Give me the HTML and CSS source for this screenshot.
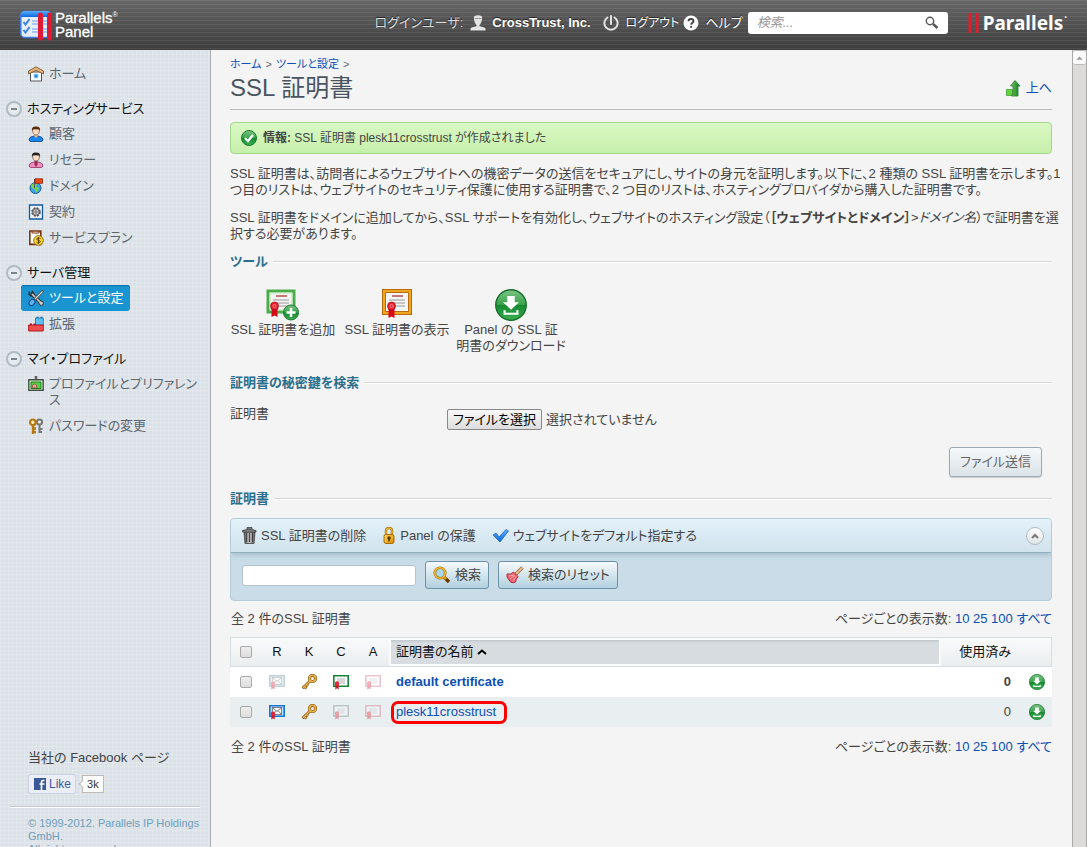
FILE: index.html
```html
<!DOCTYPE html>
<html lang="ja">
<head>
<meta charset="utf-8">
<title>SSL 証明書 - Parallels Panel</title>
<link rel="stylesheet" href="styles.css">
</head>
<body>
<svg class="defs" aria-hidden="true">
  <defs>
    <linearGradient id="green" x1="0" y1="0" x2="0" y2="1"><stop offset="0" stop-color="#7cc587"/><stop offset=".48" stop-color="#39a34c"/><stop offset=".52" stop-color="#168a30"/><stop offset="1" stop-color="#39b052"/></linearGradient>
    <linearGradient id="gold" x1="0" y1="0" x2="1" y2="1"><stop offset="0" stop-color="#ffdc5c"/><stop offset="1" stop-color="#d98500"/></linearGradient>
    <linearGradient id="blue" x1="0" y1="0" x2="0" y2="1"><stop offset="0" stop-color="#59b0ff"/><stop offset="1" stop-color="#0b66dd"/></linearGradient>
    <linearGradient id="steel" x1="0" y1="0" x2="1" y2="0"><stop offset="0" stop-color="#555"/><stop offset=".5" stop-color="#c5c5c5"/><stop offset="1" stop-color="#555"/></linearGradient>
    <linearGradient id="arrow" x1="0" y1="0" x2="1" y2="0"><stop offset="0" stop-color="#7ccb58"/><stop offset="1" stop-color="#087526"/></linearGradient>
    <symbol id="i-download" viewBox="0 0 30 30"><circle cx="15" cy="15" r="14.3" fill="url(#green)" stroke="#16702a" stroke-width="1.3"/><path d="M11.5 6.500h7v6h4L15 19.500l-7.500-7h4z" fill="#fff"/><path d="M9 20v3.200h12V20" fill="none" stroke="#fff" stroke-width="2"/></symbol>
    <symbol id="i-key" viewBox="0 0 16 16"><path d="M9.300 6.700 1.500 14.300M3.500 12.500l2 2M5.500 10.500l1.500 1.500" stroke="#80500e" stroke-width="2.600"/><circle cx="11.500" cy="4.500" r="3.100" fill="none" stroke="#80500e" stroke-width="3"/><path d="M9.300 6.700 1.800 14M3.500 12.500l1.700 1.700M5.500 10.500l1.200 1.200" stroke="#e6b04c" stroke-width="1.500"/><circle cx="11.500" cy="4.500" r="3.100" fill="none" stroke="#e6b04c" stroke-width="1.900"/></symbol>
    <symbol id="i-cert" viewBox="0 0 16 16"><path d="M.8 1.800h14.400v10.400H.8z" fill="#fff" stroke="currentColor" stroke-width="1.600"/><path d="M4 5h8M4 7h8M7 9h5" stroke="#999" stroke-width=".8"/><path d="M2.300 10h3.400v5.500L4 14.300l-1.700 1.200z" fill="#c51b28"/><circle cx="4" cy="9.500" r="2.200" fill="#e62537"/></symbol>
    <symbol id="i-req" viewBox="0 0 16 16"><path d="M.8 1.800h14.400v10.400H.8z" fill="#b9dcff" stroke="currentColor" stroke-width="1.600"/><path d="M3.500 3.500h9v7h-9z" fill="#fff" stroke="#555" stroke-width=".7"/><path d="m3.500 3.500 4.500 4 4.500-4M3.500 10.500l3.500-4M12.500 10.500l-3.500-4" fill="none" stroke="#555" stroke-width=".8"/><path d="M2.300 10h3.400v5.500L4 14.300l-1.700 1.200z" fill="#c51b28"/><circle cx="4" cy="9.800" r="2.200" fill="#e62537"/></symbol>
  </defs>
</svg>

<header class="topbar">
  <a class="brand" href="#">
    <svg width="32" height="32" viewBox="0 0 32 32" aria-hidden="true"><rect x=".8" y="2.500" width="30" height="26" rx="4" fill="#e8eef8" stroke="#3c7be6" stroke-width="1.500"/><path d="M1 8V6a4 4 0 0 1 4-4h22a4 4 0 0 1 4 4v2z" fill="url(#blue)"/><path d="m3.500 13 2 2.500L9.500 10M3.500 21l2 2.500 4-5.500" fill="none" stroke="#3d83e6" stroke-width="2"/><path d="M12 12h16M12 15h16M12 20h16M12 23h16" stroke="#6b9de8" stroke-width="1.200"/><path d="M20.500 6v23M29.500 6v23" stroke="#e01a32" stroke-width="5" stroke-linecap="round"/></svg>
    <span class="brand-name">Parallels<sup>®</sup><br>Panel</span>
  </a>
  <div class="session">
    <span class="session-label">ログインユーザ:</span>
    <a class="session-user" href="#"><svg width="16" height="16" viewBox="0 0 16 16" aria-hidden="true"><path d="M4 1.500Q8-1 12 1.500q.5 3-1 6.500l-1.500 2v1.200l5 1.300q1.500 1 1 3H.5q-.5-2 1-3l5-1.300V10L5 8Q3.500 4.500 4 1.500z" fill="#e4e4e4"/><path d="M4.500 3.500h7" stroke="#999"/></svg>CrossTrust, Inc.</a>
    <a class="session-logout" href="#"><svg width="16" height="16" viewBox="0 0 16 16" fill="none" stroke="#e2e2e2" stroke-width="2" stroke-linecap="round" aria-hidden="true"><path d="M4.500 2.500a6.600 6.600 0 1 0 7 0M8 1v8"/></svg>ログアウト</a>
    <a class="session-help" href="#"><svg width="16" height="16" viewBox="0 0 16 16" aria-hidden="true"><circle cx="8" cy="8" r="7.500" fill="#fff"/><path d="M5.500 6.300Q5.500 4 8 4t2.500 2.200c0 1.500-2.400 1.700-2.400 3.500M8.100 11v1.800" fill="none" stroke="#444" stroke-width="1.900"/></svg>ヘルプ</a>
    <form class="topsearch" role="search">
      <input type="search" placeholder="検索..." aria-label="検索">
      <button type="button" aria-label="検索する"><svg width="14" height="14" viewBox="0 0 14 14" fill="none" stroke="#555" aria-hidden="true"><circle cx="5" cy="5" r="3.700" stroke-width="1.400"/><path d="m8 8 4.500 4" stroke-width="2.400"/></svg></button>
    </form>
    <a class="company" href="#"><svg width="11" height="22" viewBox="0 0 11 22" aria-hidden="true"><path d="M2 1v20M9 1v20" stroke="#e21b2d" stroke-width="3"/></svg>Parallels<span class="company-dot">·</span></a>
  </div>
</header>

<div class="layout">
  <aside class="sidebar">
    <nav class="nav" aria-label="メイン">
      <ul>
        <li><a href="#"><svg viewBox="0 0 16 16" aria-hidden="true"><path d="M2.500 6h11v9h-11z" fill="#fff" stroke="#555"/><path d="M8 .8 15.500 5v3L8 4.500.5 8V5z" fill="#e4b079" stroke="#805832" stroke-width=".9"/><path d="M6 8h4v4H6z" fill="#168bf2" stroke="#b8d7f5"/></svg><span>ホーム</span></a></li>
      </ul>
      <h2><button type="button" aria-label="折りたたむ"></button>ホスティングサービス</h2>
      <ul>
        <li><a href="#"><svg viewBox="0 0 16 16" aria-hidden="true"><path d="M1 13q1-2.500 5-3h4q4 .5 5 3 0 2.500-2 2.500H3q-2 0-2-2.500z" fill="#1687f2" stroke="#0b3d7d" stroke-width=".8"/><path d="M6.500 8h3v2.500L8 12l-1.500-1.500z" fill="#f2b98a"/><path d="M4.500 3.500q3.500-2 7 0Q11.500 9 8 9T4.500 3.500z" fill="#fddbc0" stroke="#69401f" stroke-width=".6"/><path d="M4 5Q3 .3 8 .5T12 5l-1-1.700H5z" fill="#5a2909"/></svg><span>顧客</span></a></li>
        <li><a href="#"><svg viewBox="0 0 16 16" aria-hidden="true"><path d="M1 13q1-2.500 5-3h4q4 .5 5 3 0 2.500-2 2.500H3q-2 0-2-2.500z" fill="#ef8fc0" stroke="#8b3161" stroke-width=".8"/><path d="M6.500 8h3v5L8 15l-1.500-2z" fill="#a22955"/><path d="M4.500 3.500q3.500-2 7 0Q11.500 9 8 9T4.500 3.500z" fill="#fddbc0" stroke="#444" stroke-width=".6"/><path d="M4 5Q3 .3 8 .5T12 5l-1-1.700H5z" fill="#222"/></svg><span>リセラー</span></a></li>
        <li><a href="#"><svg viewBox="0 0 16 16" aria-hidden="true"><circle cx="7.500" cy="10" r="5.500" fill="#43a4e8" stroke="#17608c"/><path d="M3 7q3-3 6-1l-1 3 3 1-2 4q-2 0-2-3Q3 11 3 7z" fill="#75d543"/><path d="M6.500 10V1" stroke="#555"/><path d="M7 .8h7.500v4.500H7z" fill="#ed4d16" stroke="#901d05" stroke-width=".8"/></svg><span>ドメイン</span></a></li>
        <li><a href="#"><svg viewBox="0 0 16 16" aria-hidden="true"><path d="M1.500 1h13v14h-13z" fill="#eef4fa" stroke="#135ba0" stroke-width="1.300"/><circle cx="8" cy="8" r="3.800" fill="none" stroke="#555" stroke-width="2" stroke-dasharray="2 1"/><circle cx="8" cy="8" r="3.200" fill="#ddd" stroke="#555"/><circle cx="8" cy="8" r="1.200" fill="#fff" stroke="#555"/></svg><span>契約</span></a></li>
        <li><a href="#"><svg viewBox="0 0 16 16" aria-hidden="true"><path d="M1.800 1h11v13.500h-11z" fill="#fff" stroke="#7b330c" stroke-width="1.600"/><path d="M4 1v2h7V1M1.500 14h4" fill="none" stroke="#7b330c"/><circle cx="10.500" cy="10.500" r="4.800" fill="#ffd735" stroke="#8c6508"/><path d="M12.500 8.700Q11.800 8 10.500 8 8.700 8 8.700 9.200c0 1.500 3.700 1 3.700 2.500 0 1.300-3 1.600-3.900.5M10.500 7v7" fill="none" stroke="#5a3c00"/></svg><span>サービスプラン</span></a></li>
      </ul>
      <h2><button type="button" aria-label="折りたたむ"></button>サーバ管理</h2>
      <ul>
        <li><a class="active" href="#" aria-current="page"><svg viewBox="0 0 16 16" aria-hidden="true"><path d="m3 3 10 10" stroke="#333" stroke-width="3.500"/><path d="M1.300 1.500v3l2 1.500 2-.8.200-2L4 1" fill="none" stroke="#333" stroke-width="1.600"/><circle cx="13.200" cy="13.200" r="2.200" fill="#ccc" stroke="#333"/><path d="m4 4 9 9" stroke="#ccc" stroke-width="1.700"/><path d="M15 .8 7 9" stroke="#444" stroke-width="2.600"/><path d="M14.500 1.500 7 9" stroke="#d9d9d9" stroke-width="1.300"/><ellipse cx="4" cy="12.500" rx="3.400" ry="2.500" transform="rotate(-45 4 12.500)" fill="#5ab2ff" stroke="#123e6c"/></svg><span>ツールと設定</span></a></li>
        <li><a href="#"><svg viewBox="0 0 16 16" aria-hidden="true"><path d="M7.500 2h7.800v7H7.500z" fill="#5fc0f4" stroke="#1471a6" stroke-width=".8"/><path d="M8.500.8h2V2h-2zM12.500.8h2V2h-2z" fill="#116cad"/><path d="M.6 9h14.700v6H.6z" fill="#ee4d4d" stroke="#b00d18" stroke-width=".9"/><path d="M2 7.500h2V9H2zM5.500 7.500h2V9h-2z" fill="#b00d18"/></svg><span>拡張</span></a></li>
      </ul>
      <h2><button type="button" aria-label="折りたたむ"></button>マイ・プロファイル</h2>
      <ul>
        <li><a href="#"><svg viewBox="0 0 16 16" aria-hidden="true"><path d="M7 0h2v4H7z" fill="#777" stroke="#444" stroke-width=".5"/><path d="M.8 3.800h14.400v10.400H.8z" fill="#d8efcf" stroke="#445044" stroke-width="1.400"/><path d="M3 6h10v6.500H3z" fill="#5bd044" stroke="#16851a"/><path d="M4 12q0-4 2.500-4T9 12z" fill="#e8a58c" stroke="#7b3932" stroke-width=".6"/></svg><span>プロファイルとプリファレンス</span></a></li>
        <li><a href="#"><svg viewBox="0 0 16 16" aria-hidden="true"><circle cx="11.500" cy="4" r="2.600" fill="#eee" stroke="#777" stroke-width="2"/><path d="M11.500 7v8M12 11h2.500M12 14h2" stroke="#777" stroke-width="2"/><circle cx="4.800" cy="4.300" r="2.800" fill="#fff0c3" stroke="#b87711" stroke-width="2.200"/><path d="M5 7v9M5 10.500h3M5 14h3" stroke="#b87711" stroke-width="2.300"/></svg><span>パスワードの変更</span></a></li>
      </ul>
    </nav>
    <div class="sidefoot">
      <p class="fb-title">当社の Facebook ページ</p>
      <div class="fb">
        <button type="button" class="fb-like"><svg width="12" height="12" viewBox="0 0 12 12" aria-hidden="true"><path d="M0 0h12v12H0z" fill="#3b5998"/><path d="M10.500 2.500H9Q7.500 2.500 7.500 4v8M5.500 6h5" fill="none" stroke="#fff" stroke-width="1.700"/></svg>Like</button>
        <span class="fb-count">3k</span>
      </div>
      <p class="copy">© 1999-2012. Parallels IP Holdings GmbH.<br>All rights reserved.</p>
    </div>
  </aside>

  <main class="main">
    <div class="crumbs"><a href="#">ホーム</a> <i>&gt;</i> <a href="#">ツールと設定</a> <i>&gt;</i></div>
    <div class="title">
      <h1>SSL 証明書</h1>
      <a href="#"><svg width="15" height="17" viewBox="0 0 15 17" aria-hidden="true"><path d="M.5 9.500h6v6h-6z" fill="#66d438" stroke="#43a33b" stroke-width=".8"/><path d="M9 .5 14 6h-2v10H5.500l1.500-3V6H4.500z" fill="url(#arrow)" stroke="#238336" stroke-width=".8"/></svg>上へ</a>
    </div>

    <div class="notice" role="status"><svg width="16" height="16" viewBox="0 0 16 16" aria-hidden="true"><circle cx="8" cy="8" r="7.500" fill="url(#green)" stroke="#187a2d"/><path d="m4 8 3 3 5-6" fill="none" stroke="#fff" stroke-width="2.300"/></svg><span><b>情報:</b> SSL 証明書 plesk11crosstrust が作成されました</span></div>

    <p class="text">SSL 証明書は、訪問者によるウェブサイトへの機密データの送信をセキュアにし、サイトの身元を証明します。以下に、2 種類の SSL 証明書を示します。1 つ目のリストは、ウェブサイトのセキュリティ保護に使用する証明書で、2 つ目のリストは、ホスティングプロバイダから購入した証明書です。</p>
    <p class="text">SSL 証明書をドメインに追加してから、SSL サポートを有効化し、ウェブサイトのホスティング設定（<b>［ウェブサイトとドメイン］</b>&gt;<em>ドメイン名</em>）で証明書を選択する必要があります。</p>

    <section>
      <h2 class="legend">ツール</h2>
      <div class="tools">
        <a href="#"><svg width="34" height="32" viewBox="0 0 34 32" aria-hidden="true"><path d="M2 2h26v21H2z" fill="#f5f5f5" stroke="#4cac4c" stroke-width="3"/><path d="M4 4h22v17H4z" fill="none" stroke="#b7e6ad"/><path d="M10 7h11" stroke="#a22" stroke-width="1.200"/><path d="M7 11h16M7 14h16M12 17h11" stroke="#999"/><path d="M5.500 18h6v10l-3-1.500-3 1.500z" fill="#d70918"/><circle cx="8.500" cy="17" r="4" fill="#e72330" stroke="#a60713" stroke-width=".7"/><circle cx="8.500" cy="17" r="1.600" fill="none" stroke="#ff9ca0" stroke-width=".7"/><circle cx="25" cy="23.500" r="7.500" fill="url(#green)" stroke="#187a2d"/><path d="M25 19v9M20.500 23.500h9" stroke="#fff" stroke-width="2.500"/></svg>SSL 証明書を追加</a>
        <a href="#"><svg width="34" height="32" viewBox="0 0 34 32" aria-hidden="true"><path d="M4 2h26v22H4z" fill="#f5f5f5" stroke="#a55b08" stroke-width="4"/><path d="M4 2h26v22H4z" fill="none" stroke="#f0a420" stroke-width="2.500"/><path d="M12 7h11" stroke="#a22" stroke-width="1.200"/><path d="M9 11h16M9 14h16M14 17h11" stroke="#999"/><path d="M8.500 18h6v11l-3-1.500-3 1.500z" fill="#d70918"/><circle cx="11.500" cy="17" r="4" fill="#e72330" stroke="#a60713" stroke-width=".7"/><circle cx="11.500" cy="17" r="1.600" fill="none" stroke="#ff9ca0" stroke-width=".7"/></svg>SSL 証明書の表示</a>
        <a href="#"><svg width="32" height="32" aria-hidden="true"><use href="#i-download"/></svg><span>Panel の SSL 証<br>明書のダウンロード</span></a>
      </div>
    </section>

    <section>
      <h2 class="legend">証明書の秘密鍵を検索</h2>
      <form class="upload">
        <div class="upload-row">
          <span class="upload-label">証明書</span>
          <label class="file"><input type="file" aria-label="証明書"><span class="file-btn">ファイルを選択</span><span>選択されていません</span></label>
        </div>
        <button type="button" class="submit">ファイル送信</button>
      </form>
    </section>

    <section>
      <h2 class="legend">証明書</h2>
      <div class="panel">
        <div class="actions">
          <a href="#"><svg width="16" height="17" viewBox="0 0 16 17" aria-hidden="true"><path d="M3 5h11l-1 11.500H4z" fill="url(#steel)" stroke="#444" stroke-width=".8"/><path d="M5.500 6v9M8.500 6v9M11.500 6v9" stroke="#444"/><path d="M1.500 3.500Q8 1 15 3.500V5h-13.500zM6 2V.6h5V2" fill="#888" stroke="#444" stroke-width=".9"/></svg>SSL 証明書の削除</a>
          <a href="#"><svg width="14" height="17" viewBox="0 0 14 17" aria-hidden="true"><path d="M4 8V3.500q0-2.500 3-2.500t3 2.500V8" fill="none" stroke="#a76b00" stroke-width="2.400"/><path d="M4 8V3.500q0-2.500 3-2.500t3 2.500V8" fill="none" stroke="#ffcc43"/><rect x="2" y="7.500" width="10" height="9" rx="2" fill="url(#gold)" stroke="#a76b00"/><circle cx="7" cy="11" r="1.700" fill="#553100"/><path d="M7 11v3.500" stroke="#553100" stroke-width="1.500"/></svg>Panel の保護</a>
          <a href="#"><svg width="17" height="15" viewBox="0 0 17 15" aria-hidden="true"><path d="m1 7 3-2 3 4 7-7.500L16.500 3 8 14z" fill="url(#blue)" stroke="#2468b5" stroke-width=".8"/></svg>ウェブサイトをデフォルト指定する</a>
          <button type="button" class="collapse" aria-label="検索を隠す"><svg width="8" height="6" viewBox="0 0 8 6" aria-hidden="true"><path d="m1 5 3-3 3 3" fill="none" stroke="#777" stroke-width="2"/></svg></button>
        </div>
        <form class="filter">
          <input type="text" aria-label="証明書の検索">
          <button type="button"><svg width="18" height="18" viewBox="0 0 18 18" aria-hidden="true"><path d="m11 11 5 5" stroke="#6c3900" stroke-width="3.400"/><path d="m11 11 2 2" stroke="#e39b1b" stroke-width="3"/><circle cx="7" cy="7" r="5.200" fill="#a8d6ed" stroke="#9d6b00" stroke-width="2.600"/><circle cx="7" cy="7" r="5.200" fill="none" stroke="#f8bd35" stroke-width="1.500"/></svg>検索</button>
          <button type="button"><svg width="18" height="18" viewBox="0 0 18 18" aria-hidden="true"><path d="M16.500 1.500 10 8" stroke="#9a6a40" stroke-width="3.300"/><path d="M16.500 1.500 10 8" stroke="#edbd8e" stroke-width="1.800"/><path d="M1 8q4 1 6.500-2l4.500 4.500Q10 13 9.500 16q-2 1.500-5 0L1 11z" fill="#ed5e68" stroke="#b52e40"/><path d="m3 10 5-1M4 13l5-3.500M7 15.500l3-5" stroke="#ffc2c4" stroke-width=".8"/></svg>検索のリセット</button>
        </form>
      </div>

      <div class="pager"><span>全 2 件のSSL 証明書</span><span>ページごとの表示数: <a href="#">10</a> <a href="#">25</a> <a href="#">100</a> <a href="#">すべて</a></span></div>

      <table class="list">
        <thead>
          <tr><th class="c-check"><input type="checkbox" aria-label="すべて選択"></th><th class="c-flag">R</th><th class="c-flag">K</th><th class="c-flag">C</th><th class="c-flag">A</th><th class="c-name"><a href="#">証明書の名前<svg width="10" height="6" viewBox="0 0 10 6" aria-hidden="true"><path d="m1 5 4-3.500L9 5" fill="none" stroke="#000" stroke-width="2"/></svg></a></th><th class="c-used">使用済み</th><th class="c-get"></th></tr>
        </thead>
        <tbody>
          <tr>
            <td><input type="checkbox" aria-label="default certificate"></td>
            <td><svg class="blank off" aria-hidden="true"><use href="#i-req"/></svg></td>
            <td><svg aria-hidden="true"><use href="#i-key"/></svg></td>
            <td><svg class="cert" aria-hidden="true"><use href="#i-cert"/></svg></td>
            <td><svg class="ca off" aria-hidden="true"><use href="#i-cert"/></svg></td>
            <td class="c-name"><a href="#"><b>default certificate</b></a></td>
            <td class="c-used"><b>0</b></td>
            <td><a href="#" aria-label="ダウンロード"><svg class="get" aria-hidden="true"><use href="#i-download"/></svg></a></td>
          </tr>
          <tr>
            <td><input type="checkbox" aria-label="plesk11crosstrust"></td>
            <td><svg class="req" aria-hidden="true"><use href="#i-req"/></svg></td>
            <td><svg aria-hidden="true"><use href="#i-key"/></svg></td>
            <td><svg class="none off" aria-hidden="true"><use href="#i-cert"/></svg></td>
            <td><svg class="ca off" aria-hidden="true"><use href="#i-cert"/></svg></td>
            <td class="c-name"><a class="marked" href="#">plesk11crosstrust</a></td>
            <td class="c-used">0</td>
            <td><a href="#" aria-label="ダウンロード"><svg class="get" aria-hidden="true"><use href="#i-download"/></svg></a></td>
          </tr>
        </tbody>
      </table>

      <div class="pager pager-end"><span>全 2 件のSSL 証明書</span><span>ページごとの表示数: <a href="#">10</a> <a href="#">25</a> <a href="#">100</a> <a href="#">すべて</a></span></div>
    </section>
  </main>
  <div class="scrollbar" aria-hidden="true"><svg viewBox="0 0 14 14"><path d="M3.500 9.500 7 6l3.500 3.500z" fill="#999"/></svg></div>
</div>
</body>
</html>
```
FILE: styles.css
```css
* { box-sizing: border-box; }
body {
  margin: 0;
  height: 100vh;
  display: flex;
  flex-direction: column;
  overflow: hidden;
  background: #f4f4f4;
  color: #444;
  font: 13px/16px "Liberation Sans", "Noto Sans CJK JP", sans-serif;
  font-feature-settings: "palt";
}
h1, h2, p, ul { margin: 0; padding: 0; }
ul { list-style: none; }
a { color: #0b4fb8; text-decoration: none; }
button, input { font: inherit; font-feature-settings: inherit; color: inherit; }
svg { flex: none; }
.defs { position: absolute; width: 0; height: 0; }

/* Top bar */
.topbar {
  flex: none;
  height: 50px;
  padding: 0 20px 4px;
  display: flex;
  align-items: center;
  justify-content: space-between;
  color: #fff;
  background:
    repeating-linear-gradient(rgba(255,255,255,.07) 0 1px, transparent 1px 4px),
    linear-gradient(#666, #3d3d3d);
}
.topbar a { color: #fff; }
.brand { display: flex; align-items: center; gap: 3px; padding-top: 4px; }
.brand-name { font-size: 15px; line-height: 14px; -webkit-text-stroke: 0.3px #fff; }
.brand-name sup { font-size: 7px; line-height: 0; -webkit-text-stroke: 0; }
.session { display: flex; align-items: center; text-shadow: 0 -1px 1px #222; }
.session a { display: flex; align-items: center; }
.session-label { color: #ddd; }
.session-user { font-weight: bold; gap: 6px; margin-left: 7px; }
.session-logout { gap: 7px; margin-left: 12px; font-size: 12px; }
.session-help { gap: 6px; margin-left: 4px; }
.topsearch {
  width: 200px;
  height: 22px;
  display: flex;
  align-items: center;
  margin: 0 20px 0 5px;
  padding: 0 9px;
  background: #fff;
  border-radius: 3px;
}
.topsearch input {
  flex: 1;
  min-width: 0;
  border: 0;
  padding: 0;
  background: none;
  color: #444;
  font-style: italic;
  outline: 0;
}
.topsearch input::placeholder { color: #999; opacity: 1; }
.topsearch button { display: flex; border: 0; padding: 0; background: none; }
.company { font: bold 19px/22px "Noto Sans", sans-serif; gap: 4px; text-shadow: none; }
.company-dot { font-size: 10px; margin: -12px 0 0 -3px; }

/* Page frame */
.layout { flex: 1; min-height: 0; display: flex; }
.sidebar {
  flex: none;
  width: 211px;
  display: flex;
  flex-direction: column;
  justify-content: space-between;
  overflow: hidden;
  border-right: 1px solid #a9b0b5;
  background:
    repeating-linear-gradient(rgba(255,255,255,.2) 0 1px, transparent 1px 4px),
    repeating-linear-gradient(90deg, rgba(255,255,255,.2) 0 1px, transparent 1px 4px),
    #dae1e7;
}
.nav { padding: 11px 4px 0 6px; }
.nav h2 {
  display: flex;
  align-items: center;
  gap: 5px;
  height: 24px;
  margin-top: 11px;
  font-size: 13px;
  font-weight: normal;
  color: #111;
}
.nav ul + h2 { margin-top: 10px; }
.nav h2 button {
  width: 16px;
  height: 16px;
  padding: 0;
  display: grid;
  place-items: center;
  border: 2px solid #b0bcc4;
  border-radius: 50%;
  background: #e6ebef;
}
.nav h2 button::before { content: ""; width: 6px; height: 2px; background: #7a858c; }
.nav li { display: flex; }
.nav li a {
  display: flex;
  gap: 5px;
  margin-left: 15px;
  padding: 5px 7px;
  color: #5b6670;
  border-radius: 3px;
  line-break: anywhere;
}
.nav li svg { width: 16px; height: 16px; }
.nav li a.active { color: #fff; background: #1b95d2; box-shadow: inset 0 1px 1px #0c6ea8; }

.sidefoot { padding-left: 10px; padding-right: 10px; }
.fb-title { padding-left: 18px; }
.fb { display: flex; align-items: center; gap: 6px; padding: 8px 18px 12px; }
.fb-like {
  display: flex;
  align-items: center;
  gap: 3px;
  height: 20px;
  padding: 0 4px 0 5px;
  border: 1px solid #c8d0e6;
  border-radius: 3px;
  background: #eceef5;
  color: #3b5998;
  font-size: 12px;
}
.fb-count { position: relative; padding: 0 4px; border: 1px solid #bbb; background: #fff; font-size: 11px; color: #333; }
.fb-count::before {
  content: "";
  position: absolute;
  left: -3px;
  top: 5px;
  width: 5px;
  height: 5px;
  background: #fff;
  border: solid #bbb;
  border-width: 0 0 1px 1px;
  transform: rotate(45deg);
}
.copy {
  max-height: 41px;
  overflow: hidden;
  padding: 10px 0 0 18px;
  border-top: 1px solid #c2c9ce;
  box-shadow: inset 0 1px #fff;
  font-size: 11px;
  line-height: 13px;
  color: #6f9fba;
}

.scrollbar { flex: none; width: 15px; border: solid #a9a9a7; border-width: 0 1px; background: #dcdbda; }
.scrollbar svg { display: block; width: 100%; background: #fafafa; border: 1px solid #bbb; border-width: 1px 0; border-radius: 3px; }

/* Content */
.main { flex: 1; min-width: 0; padding: 6px 20px 0 19px; overflow: hidden; }
.crumbs { font-size: 11px; color: #666; }
.crumbs i { font-style: normal; margin: 0 1px; }
.title {
  display: flex;
  justify-content: space-between;
  align-items: center;
  height: 38px;
  margin-bottom: 12px;
  padding-bottom: 5px;
  border-bottom: 1px solid #bbb;
}
.title h1 { font-size: 24px; line-height: 32px; font-weight: normal; color: #4a5460; }
.title a { display: flex; align-items: center; gap: 5px; }
.notice {
  display: flex;
  align-items: center;
  gap: 6px;
  height: 32px;
  margin-bottom: 12px;
  padding: 0 10px;
  border: 1px solid #a5d78d;
  border-radius: 4px;
  background: linear-gradient(#daf8c4, #c7f0ab);
  font-size: 12px;
}
.text { margin: 0 -16px 12px 0; }
.legend {
  display: flex;
  align-items: center;
  gap: 5px;
  font-size: 13px;
  line-height: 16px;
  color: #2b6e8c;
}
.legend::after { content: ""; flex: 1; height: 2px; background: linear-gradient(#d6d6d6 50%, #fff 50%); }
.tools { display: flex; gap: 8px; padding: 19px 0 21px; }
.tools a { display: flex; flex-direction: column; align-items: center; gap: 1px; width: 106px; text-align: center; white-space: nowrap; color: #444; }
.upload { padding-top: 15px; }
.upload-row { display: flex; }
.upload-label { width: 217px; }
.file { position: relative; display: flex; align-items: center; gap: 4px; padding-top: 3px; }
.file input { position: absolute; inset: 0; width: 100%; opacity: 0; }
.file-btn { padding: 2px 5px 1px; border: 1px solid #888; border-radius: 2px; background: linear-gradient(#f8f8f8, #ddd); color: #000; }
.submit {
  display: block;
  height: 30px;
  margin: 17px 10px 14px auto;
  padding: 0 10px;
  border: 1px solid #9aabb8;
  border-radius: 3px;
  background: linear-gradient(#f4f8fa, #dbe3e8);
  box-shadow: 0 1px 1px #ccc;
  color: #666;
}

.panel { margin-top: 11px; border: 1px solid #b3cedb; border-radius: 4px; background: #c9dce7; overflow: hidden; }
.actions {
  display: flex;
  align-items: center;
  gap: 16px;
  height: 34px;
  padding: 0 7px 0 10px;
  background: linear-gradient(#e3f1fa, #d1e3ed);
  border-bottom: 1px solid #8fb0c2;
  box-shadow: 0 2px 5px #a5bcc9;
}
.actions a { display: flex; align-items: center; gap: 4px; color: #444; }
.collapse {
  display: grid;
  place-items: center;
  width: 18px;
  height: 18px;
  margin-left: auto;
  padding: 0;
  border: 1px solid #aeb9c0;
  border-radius: 50%;
  background: linear-gradient(#fff, #e0e4e6);
}
.filter { display: flex; align-items: center; gap: 9px; padding: 8px 11px 11px; }
.filter input { width: 174px; height: 21px; border: 1px solid #b3c3cc; border-radius: 3px; background: #fff; }
.filter button {
  display: flex;
  align-items: center;
  gap: 4px;
  height: 28px;
  padding: 0 7px;
  border: 1px solid #6b92a9;
  border-radius: 3px;
  background: linear-gradient(#f5fafc, #b2d0df);
}

.pager { display: flex; justify-content: space-between; padding: 10px 0 10px 1px; }
.pager-end { padding-top: 12px; }
.list { width: 100%; border-collapse: separate; border-spacing: 0; background: #fff; table-layout: fixed; }
.list th, .list td { height: 30px; padding: 0; text-align: center; vertical-align: middle; font-weight: normal; }
.list thead { background: linear-gradient(#fafbfb, #e9edef); color: #111; }
.list thead tr { outline: 1px solid #d7dee2; outline-offset: -1px; }
.list .c-check { width: 31px; }
.list .c-flag { width: 32px; }
.list .c-name { padding-left: 7px; text-align: left; }
.list .c-used { width: 80px; padding-right: 10px; text-align: right; }
.list .c-get { width: 31px; }
.list thead .c-name { padding-left: 5px; background: linear-gradient(#c0c8cd, #d6dce0 3px); background-clip: padding-box; border: solid #fafbfb; border-width: 3px 2px; }
.list thead a { display: flex; align-items: center; gap: 3px; color: #111; }
.list tbody tr:nth-child(2) { background: #e9eef1; }
.list tbody svg { width: 16px; height: 16px; display: block; margin: 0 auto; }
.list input {
  display: block;
  appearance: none;
  width: 12px;
  height: 12px;
  margin: 0 auto;
  border: 1px solid #aaa;
  border-radius: 2px;
  background: linear-gradient(#eee, #ddd);
}
.list .req { color: #1676d2; }
.list .blank { color: #6b8798; }
.list .cert { color: #168435; }
.list .ca { color: #d16a78; }
.list .none { color: #718978; }
.list .off { opacity: .38; }
.marked { position: relative; }
.marked::after { content: ""; position: absolute; inset: -3px -11px -5px -5px; border: 3px solid #f00; border-radius: 7px; }
```
